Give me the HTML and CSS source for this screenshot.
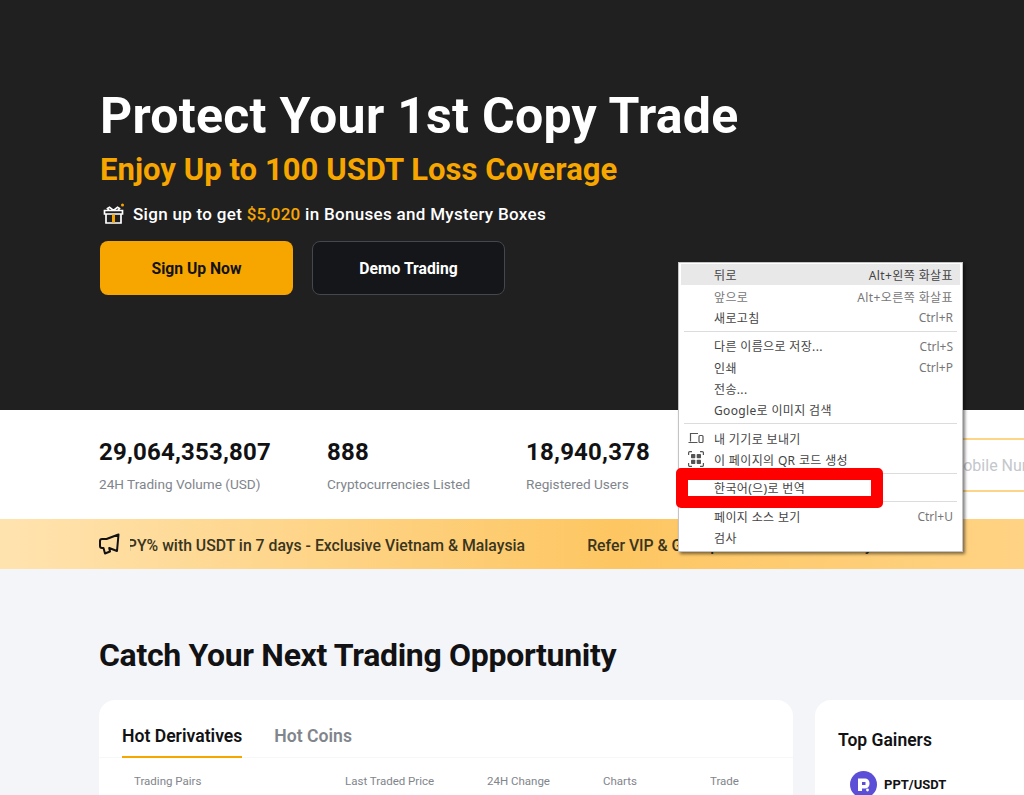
FILE: index.html
```html
<!DOCTYPE html>
<html lang="en">
<head>
    <meta charset="UTF-8">
    <meta name="viewport" content="width=device-width, initial-scale=1.0">
    <title>Protect Your 1st Copy Trade</title>
    <link rel="stylesheet" href="styles.css">
</head>
<body>
    <!-- Hero -->
    <section class="hero">
        <h1>Protect Your 1st Copy Trade</h1>
        <p class="hero-sub">Enjoy Up to 100 USDT Loss Coverage</p>
        <p class="hero-bonus">
            <svg class="gift-icon" width="22" height="22" viewBox="0 0 22 22" fill="none" stroke="#fff" stroke-width="1.7">
                <path d="M3 11v9h15v-9"/>
                <path d="M1.5 7.5h18v3.5h-18z"/>
                <path d="M10.5 7.5 6.500 4.200 4.500 5.500 6 7.500M10.500 7.500l4-3.300 2 1.300-1.500 2"/>
                <rect x="9" y="11.500" width="3" height="8" fill="#f7a600" stroke="none"/>
                <circle cx="19.500" cy="2" r="1.500" fill="#f7a600" stroke="none"/>
            </svg>
            <span>Sign up to get <b class="accent">$5,020</b> in Bonuses and Mystery Boxes</span>
        </p>
        <div class="hero-buttons">
            <button class="btn btn-primary">Sign Up Now</button>
            <button class="btn btn-dark">Demo Trading</button>
        </div>
    </section>

    <!-- Stats -->
    <section class="stats">
        <div class="stat">
            <div class="stat-value">29,064,353,807</div>
            <div class="stat-label">24H Trading Volume (USD)</div>
        </div>
        <div class="stat">
            <div class="stat-value">888</div>
            <div class="stat-label">Cryptocurrencies Listed</div>
        </div>
        <div class="stat">
            <div class="stat-value">18,940,378</div>
            <div class="stat-label">Registered Users</div>
        </div>
        <input class="signup-input" type="text" placeholder="Email/Mobile Number">
    </section>

    <!-- Ticker -->
    <section class="ticker">
        <svg class="ticker-icon" width="22" height="22" viewBox="0 0 22 22" fill="none" stroke="#121214" stroke-width="2" stroke-linejoin="round">
            <path d="M19.500 1.500 7.500 6H3A2 2 0 0 0 1 8v5a2 2 0 0 0 2 2h1.500l1.500 5.500 5-2-.8-3.500 7.800 3z"/>
        </svg>
        <div class="ticker-track">
            <div class="ticker-items">
                <span>Earn Up to 20% APY% with USDT in 7 days - Exclusive Vietnam &amp; Malaysia</span>
                <span>Refer VIP &amp; Get Up to 500 USDT Monthly</span>
            </div>
        </div>
    </section>

    <!-- Markets -->
    <section class="markets">
        <h2>Catch Your Next Trading Opportunity</h2>
        <div class="market-cards">
            <div class="card card-hot">
                <div class="tabs">
                    <span class="tab tab-active">Hot Derivatives</span>
                    <span class="tab">Hot Coins</span>
                </div>
                <div class="table-head">
                    <span class="col-pair">Trading Pairs</span>
                    <span class="col-price">Last Traded Price</span>
                    <span class="col-change">24H Change</span>
                    <span class="col-chart">Charts</span>
                    <span>Trade</span>
                </div>
            </div>
            <div class="card card-gainers">
                <h3>Top Gainers</h3>
                <div class="coin-row">
                    <svg width="27" height="27" viewBox="0 0 27 27">
                        <circle cx="13.500" cy="13.500" r="13.500" fill="#5a4fd6"/>
                        <path d="M8 7.500h7a4.500 4.500 0 0 1 4.500 4.500v1a4.500 4.500 0 0 1-4.500 4.500h-3v2.500H8z" fill="#fff"/>
                        <rect x="12" y="11" width="3.500" height="3" fill="#5a4fd6"/>
                        <circle cx="17.500" cy="19" r="1.400" fill="#fff"/>
                    </svg>
                    <span class="coin-name">PPT/USDT</span>
                </div>
            </div>
        </div>
    </section>

    <!-- Browser context menu -->
    <div class="context-menu">
        <div class="menu-row menu-row-hover"><span>뒤로</span><span class="shortcut shortcut-ko">Alt+왼쪽 화살표</span></div>
        <div class="menu-row menu-row-dim"><span>앞으로</span><span class="shortcut shortcut-ko">Alt+오른쪽 화살표</span></div>
        <div class="menu-row"><span>새로고침</span><span class="shortcut">Ctrl+R</span></div>
        <div class="menu-sep"></div>
        <div class="menu-row"><span>다른 이름으로 저장...</span><span class="shortcut">Ctrl+S</span></div>
        <div class="menu-row"><span>인쇄</span><span class="shortcut">Ctrl+P</span></div>
        <div class="menu-row"><span>전송...</span></div>
        <div class="menu-row"><span>Google로 이미지 검색</span></div>
        <div class="menu-sep"></div>
        <div class="menu-row">
            <svg class="menu-icon" width="16" height="12" viewBox="0 0 16 12" fill="none" stroke="#555" stroke-width="1.200">
                <path d="M2.500 9.500V1.500H10M0.500 10.500H9.500"/>
                <rect x="11" y="3.500" width="4" height="7" rx="1"/>
            </svg>
            <span>내 기기로 보내기</span>
        </div>
        <div class="menu-row">
            <svg class="menu-icon" width="16" height="16" viewBox="0 0 16 16" fill="none">
                <path d="M.6 4V1.800A1.200 1.200 0 0 1 1.800.6H4M12 .6h2.200a1.200 1.200 0 0 1 1.200 1.200V4M15.400 12v2.200a1.200 1.200 0 0 1-1.200 1.200H12M4 15.400H1.800A1.200 1.200 0 0 1 .6 14.200V12" stroke="#555" stroke-width="1.200"/>
                <rect x="3" y="3" width="4.300" height="4.300" rx=".8" fill="#555"/>
                <rect x="8.700" y="3" width="4.300" height="4.300" rx=".8" fill="#555"/>
                <rect x="3" y="8.700" width="4.300" height="4.300" rx=".8" fill="#555"/>
                <rect x="8.700" y="8.700" width="4.300" height="4.300" rx=".8" fill="#555"/>
            </svg>
            <span>이 페이지의 QR 코드 생성</span>
        </div>
        <div class="menu-sep"></div>
        <div class="menu-row"><span>한국어(으)로 번역</span></div>
        <div class="menu-sep"></div>
        <div class="menu-row"><span>페이지 소스 보기</span><span class="shortcut">Ctrl+U</span></div>
        <div class="menu-row"><span>검사</span></div>
        <div class="red-box"></div>
    </div>
</body>
</html>
```

FILE: styles.css
```css
html,
body {
    margin: 0;
    height: 795px;
    overflow: hidden;
}

body {
    position: relative;
    font-family: Roboto, "Noto Sans", sans-serif;
    background-color: #f4f5f8;
    color: #121214;
}

h1,
h2,
h3,
p {
    margin: 0;
}

/* Hero */
.hero {
    height: 410px;
    box-sizing: border-box;
    padding: 87px 0 0 100px;
    background-color: #202020;
    color: #fff;
}

.hero h1 {
    font-size: 50px;
    line-height: 58px;
    font-weight: 700;
    letter-spacing: 0.27px;
}

.hero-sub {
    margin-top: 7px;
    font-size: 31px;
    line-height: 36px;
    font-weight: 700;
    letter-spacing: 0.05px;
    color: #f7a600;
}

.hero-bonus {
    display: flex;
    align-items: center;
    gap: 8px;
    margin-top: 14px;
    margin-left: 3px;
    font-size: 17px;
    line-height: 24px;
    font-weight: 500;
    letter-spacing: 0.3px;
}

.accent {
    font-weight: 500;
    color: #f7a600;
}

.hero-buttons {
    display: flex;
    gap: 19px;
    margin-top: 15px;
}

.btn {
    width: 193px;
    height: 54px;
    border-radius: 8px;
    font-family: inherit;
    font-size: 15.700px;
    font-weight: 700;
    cursor: pointer;
}

.btn-primary {
    border: none;
    background-color: #f7a600;
    color: #121214;
}

.btn-dark {
    border: 1px solid #44474d;
    background-color: #14161a;
    color: #fff;
}

/* Stats */
.stats {
    display: flex;
    gap: 56px;
    height: 109px;
    box-sizing: border-box;
    padding: 28px 0 0 99px;
    background-color: #fff;
    overflow: hidden;
}

.stat {
    flex: none;
}

.stat-value {
    font-size: 24px;
    line-height: 28px;
    font-weight: 700;
    letter-spacing: 0.2px;
}

.stat-label {
    margin-top: 8px;
    font-size: 13.600px;
    line-height: 20px;
    color: #81858c;
}

.signup-input {
    flex: none;
    width: 300px;
    height: 54px;
    margin-left: 179px;
    box-sizing: border-box;
    padding: 0 16px;
    border: 2px solid #fdd586;
    font-family: inherit;
    font-size: 16px;
}

.signup-input::placeholder {
    color: #c4c7cc;
}

/* Ticker */
.ticker {
    display: flex;
    align-items: center;
    gap: 9px;
    height: 50px;
    padding-left: 99px;
    background: linear-gradient(90deg, #ffe3af 0%, #fdc662 60%, #ffd384 100%);
}

.ticker-icon {
    flex: none;
}

.ticker-track {
    flex: 1;
    overflow: hidden;
    padding-top: 2px;
}

.ticker-items {
    display: flex;
    gap: 62px;
    width: max-content;
    transform: translateX(-124px);
    font-size: 15.800px;
    font-weight: 500;
    color: #3a3520;
    white-space: nowrap;
}

/* Markets */
.markets {
    padding: 66px 0 0 99px;
}

.markets h2 {
    font-size: 32px;
    line-height: 40px;
    font-weight: 700;
    letter-spacing: -0.32px;
}

.market-cards {
    display: flex;
    gap: 22px;
    margin-top: 25px;
}

.card {
    flex: none;
    height: 200px;
    border-radius: 16px;
    background-color: #fff;
}

.card-hot {
    width: 694px;
}

.card-gainers {
    width: 300px;
    box-sizing: border-box;
    padding: 28px 23px;
}

.tabs {
    display: flex;
    gap: 32px;
    padding: 25px 23px 0;
    border-bottom: 1px solid #f7f7f8;
}

.tab {
    padding-bottom: 9px;
    font-size: 17.600px;
    line-height: 22px;
    font-weight: 600;
    color: #81858c;
}

.tab-active {
    margin-bottom: -1px;
    border-bottom: 2px solid #f7a600;
    color: #121214;
}

.table-head {
    display: flex;
    padding: 15px 0 0 35px;
    font-size: 11.500px;
    line-height: 16px;
    color: #81858c;
}

.col-pair {
    width: 211px;
}

.col-price {
    width: 142px;
}

.col-change {
    width: 116px;
}

.col-chart {
    width: 107px;
}

.card-gainers h3 {
    font-size: 17.500px;
    line-height: 24px;
    font-weight: 600;
}

.coin-row {
    display: flex;
    align-items: center;
    gap: 7px;
    margin-top: 19px;
    margin-left: 12px;
}

.coin-name {
    font-size: 13px;
    font-weight: 700;
}

/* Context menu */
.context-menu {
    position: absolute;
    left: 678px;
    top: 262px;
    width: 279px;
    padding: 1px 2px 3px;
    border: 1px solid #c4c4c4;
    background-color: #fff;
    box-shadow: 2px 2px 3px rgba(0, 0, 0, 0.5);
    font-family: "Noto Sans", "Noto Sans CJK KR", sans-serif;
    font-size: 12px;
    letter-spacing: 0.35px;
    color: #444;
}

.menu-row {
    position: relative;
    display: flex;
    justify-content: space-between;
    align-items: center;
    box-sizing: border-box;
    height: 21.350px;
    padding: 1px 7px 0 33px;
}

.menu-row-hover {
    background-color: #e8e8e9;
}

.menu-row-dim {
    color: #777;
}

.shortcut {
    letter-spacing: 0;
    color: #777;
}

.shortcut-ko {
    letter-spacing: 0.4px;
}

.menu-row-hover .shortcut {
    color: #444;
}

.menu-sep {
    height: 1px;
    margin: 3px;
    background-color: #dcdcdc;
}

.menu-icon {
    position: absolute;
    left: 7px;
    top: 50%;
    transform: translateY(-50%);
}

.red-box {
    position: absolute;
    left: -3px;
    top: 205px;
    width: 183px;
    height: 16px;
    border: 12px solid #fe0000;
    border-radius: 5px;
}
```
